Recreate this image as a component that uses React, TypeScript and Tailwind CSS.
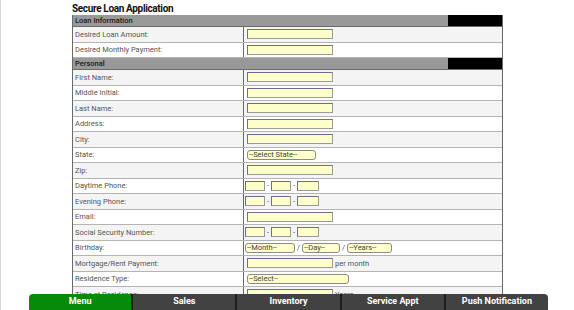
import React from "react";

type Field =
  | { kind: "text"; label: string; after?: string }
  | { kind: "select"; label: string; text: string; width: string }
  | { kind: "triple"; label: string }
  | { kind: "birthday"; label: string };

const loanFields: Field[] = [
  { kind: "text", label: "Desired Loan Amount:" },
  { kind: "text", label: "Desired Monthly Payment:" },
];

const personalFields: Field[] = [
  { kind: "text", label: "First Name:" },
  { kind: "text", label: "Middle Initial:" },
  { kind: "text", label: "Last Name:" },
  { kind: "text", label: "Address:" },
  { kind: "text", label: "City:" },
  { kind: "select", label: "State:", text: "--Select State--", width: "w-[69px]" },
  { kind: "text", label: "Zip:" },
  { kind: "triple", label: "Daytime Phone:" },
  { kind: "triple", label: "Evening Phone:" },
  { kind: "text", label: "Email:" },
  { kind: "triple", label: "Social Security Number:" },
  { kind: "birthday", label: "Birthday:" },
  { kind: "text", label: "Mortgage/Rent Payment:", after: "per month" },
  { kind: "select", label: "Residence Type:", text: "--Select--", width: "w-[102px]" },
  { kind: "text", label: "Time at Residence:", after: "Years" },
];

const tabs = ["Menu", "Sales", "Inventory", "Service Appt", "Push Notification"];

function TextBox({ width = "w-[86px]" }: { width?: string }) {
  return (
    <span
      className={`${width} h-[10px] shrink-0 border border-[#9a9a9a] border-t-[#6f6f8a] border-l-[#6f6f8a] bg-[#ffffcc]`}
    />
  );
}

function SelectBox({ text, width }: { text: string; width: string }) {
  return (
    <span
      className={`${width} flex h-[10px] shrink-0 items-center rounded-[3px] border border-[#8a8a8a] bg-[#ffffcc] pl-[1px] text-[7.5px] leading-none text-[#444]`}
    >
      {text}
    </span>
  );
}

function FieldValue({ field }: { field: Field }) {
  if (field.kind === "text") {
    return (
      <>
        <TextBox />
        {field.after && <span className="ml-[2px] text-[7.5px] text-[#555]">{field.after}</span>}
      </>
    );
  }
  if (field.kind === "select") {
    return <SelectBox text={field.text} width={field.width} />;
  }
  if (field.kind === "triple") {
    return (
      <div className="-ml-[2px] flex items-center">
        <TextBox width="w-[20px]" />
        <span className="mx-[2px] text-[7.5px] text-[#555]">-</span>
        <TextBox width="w-[20px]" />
        <span className="mx-[2px] text-[7.5px] text-[#555]">-</span>
        <TextBox width="w-[22px]" />
      </div>
    );
  }
  return (
    <div className="-ml-[2px] flex items-center">
      <SelectBox text="--Month--" width="w-[50px]" />
      <span className="mx-[2px] text-[7.5px] text-[#555]">/</span>
      <SelectBox text="--Day--" width="w-[38px]" />
      <span className="mx-[2px] text-[7.5px] text-[#555]">/</span>
      <SelectBox text="--Years--" width="w-[45px]" />
    </div>
  );
}

function Section({ title, fields }: { title: string; fields: Field[] }) {
  return (
    <>
      <div className="flex h-[12px] border-b border-[#6a6a6a] bg-[#999999]">
        <div className="flex-1 pl-[2px] text-[7.5px] font-medium leading-[11px] text-[#1a1a1a]">
          {title}
        </div>
        <div className="w-[54px] bg-black" />
      </div>
      {fields.map((field, i) => (
        <div
          key={field.label}
          className={`flex h-[15.5px] border-b border-[#b4b4b4] ${i % 2 === 0 ? "bg-[#f4f4f4]" : "bg-white"}`}
        >
          <div className="flex w-[171px] items-center border-r border-[#6a6a6a] pl-[2px] text-[7.5px] text-[#555]">
            {field.label}
          </div>
          <div className="flex flex-1 items-center pl-[3px]">
            <FieldValue field={field} />
          </div>
        </div>
      ))}
    </>
  );
}

export default function App() {
  return (
    <div
      className="relative h-[310px] w-[574px] overflow-hidden border-l border-[#d8d8d8] bg-white"
      style={{ fontFamily: "Roboto, 'Liberation Sans', sans-serif" }}
    >
      <div className="ml-[71px] pt-[3px]">
        <h1 className="text-[10px] font-bold leading-[12px] tracking-[-0.35px] text-[#111]">
          Secure Loan Application
        </h1>
        <div className="w-[431px] border border-t-0 border-[#6a6a6a]">
          <Section title="Loan Information" fields={loanFields} />
          <Section title="Personal" fields={personalFields} />
        </div>
      </div>

      {/* bottom tab bar sits over the form */}
      <nav className="absolute bottom-0 left-[28px] flex h-[16px] w-[519px] overflow-hidden rounded-t-[4px]">
        {tabs.map((tab, i) => (
          <div
            key={tab}
            className={`flex flex-1 items-center justify-center text-[9px] font-bold text-white ${
              i === 0 ? "bg-[#078a07]" : "border-l-2 border-[#1e1e1e] bg-[#424242]"
            }`}
          >
            {tab}
          </div>
        ))}
      </nav>
    </div>
  );
}
